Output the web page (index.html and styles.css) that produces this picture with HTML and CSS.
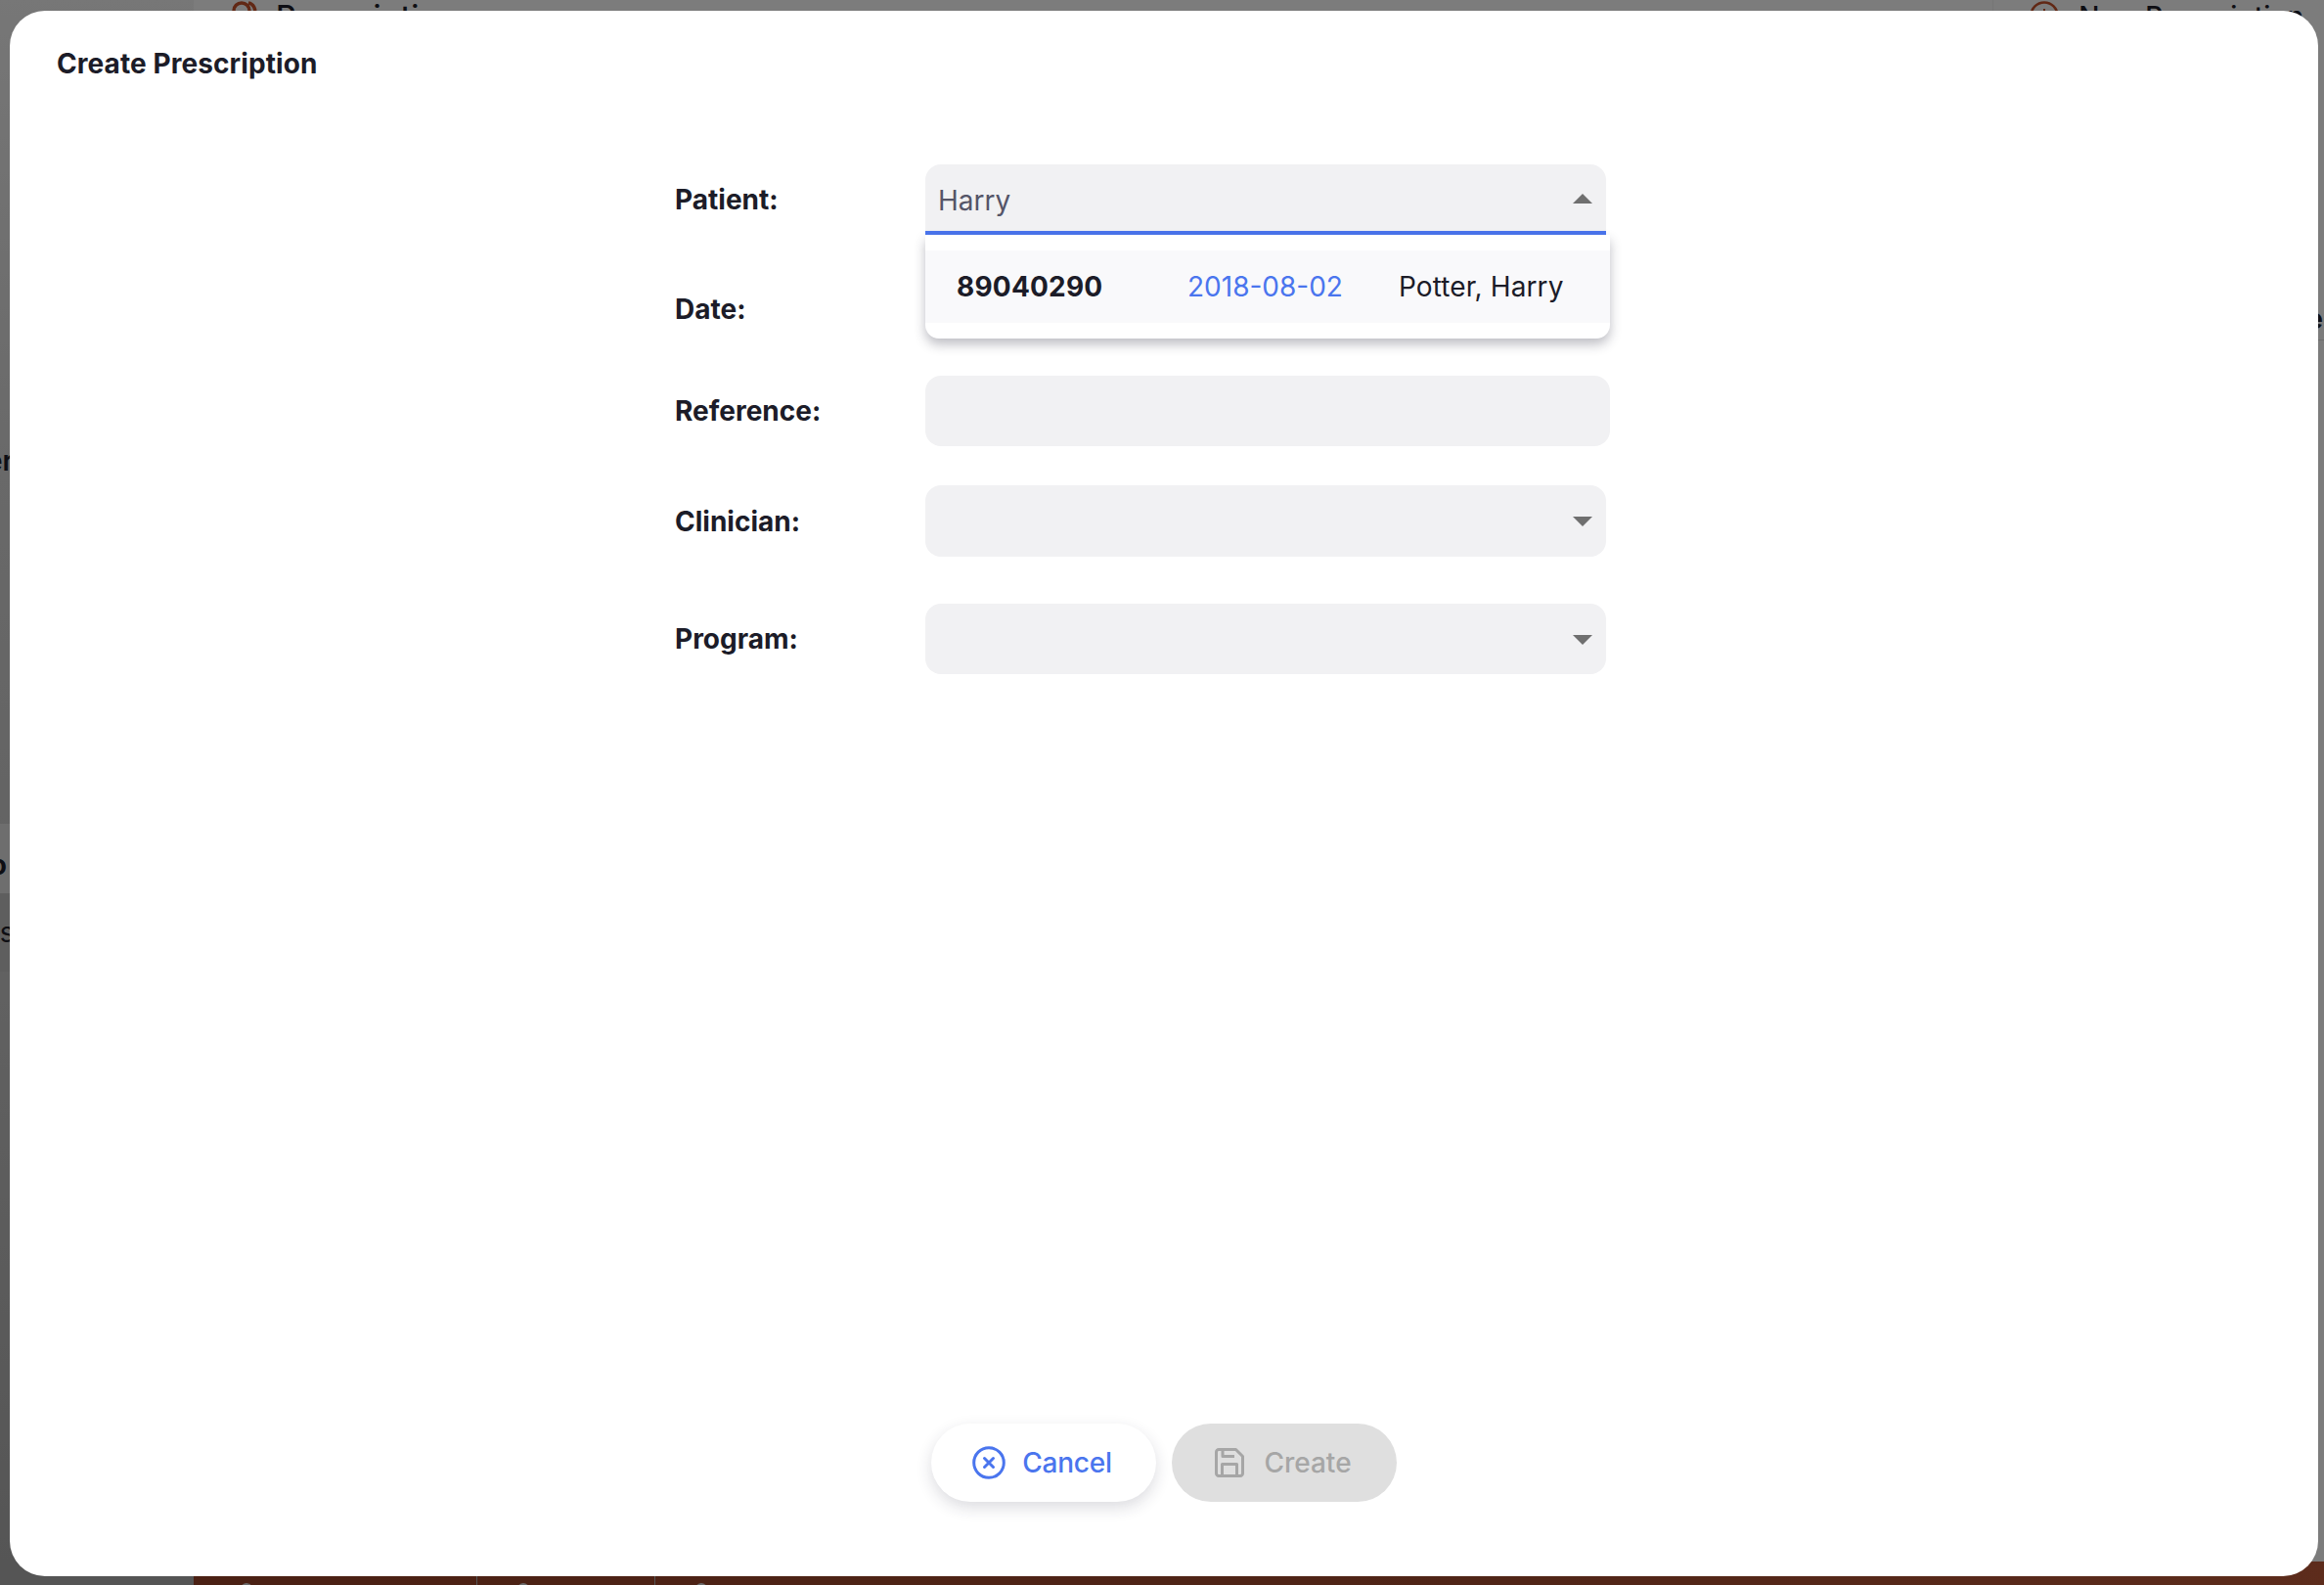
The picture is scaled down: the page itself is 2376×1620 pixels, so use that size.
FILE: index.html
```html
<!DOCTYPE html>
<html lang="en">
<head>
<meta charset="utf-8">
<title>Create Prescription</title>
<link rel="stylesheet" href="styles.css">
</head>
<body>
<div class="app">
  <aside class="sidebar">
    <div class="side-spacer-a"></div>
    <div class="side-text side-text-a">Center</div>
    <div class="side-spacer-b"></div>
    <div class="side-block">
      <div class="side-text side-bold">Info</div>
    </div>
    <div class="side-block side-block-dark">
      <div class="side-text side-thin">Items</div>
    </div>
  </aside>
  <main class="main">
    <header class="topbar">
      <div class="top-item top-item-left">
        <svg class="top-icon top-icon-left" viewBox="0 0 26 32"><circle cx="10" cy="10" r="8" fill="none" stroke="#c2512a" stroke-width="3.5"/><path d="M17 2a8 8 0 0 1 6 11" fill="none" stroke="#c2512a" stroke-width="3.5"/></svg>
        <span class="top-label">Prescriptions</span>
      </div>
      <div class="top-item top-item-right">
        <svg class="top-icon top-icon-right" viewBox="0 0 30 30"><circle cx="15" cy="15" r="13.5" fill="none" stroke="#c2512a" stroke-width="2.6"/><path d="M15 8v14M8 15h14" stroke="#c2512a" stroke-width="2"/></svg>
        <span class="top-label">New Prescription</span>
      </div>
    </header>
    <div class="main-body">
      <div class="main-row"><div class="main-edge">Type</div></div>
    </div>
    <footer class="footer-bar">
      <div class="foot-cell foot-cell-a"><span class="foot-icon"></span></div>
      <div class="foot-cell foot-cell-b"><span class="foot-icon"></span></div>
      <div class="foot-cell foot-cell-c"><span class="foot-icon"></span></div>
    </footer>
  </main>
</div>
<div class="scrim"></div>
<section class="modal">
  <h1 class="modal-title">Create Prescription</h1>
  <form class="form">
    <div class="row row-patient">
      <label class="label">Patient:</label>
      <div class="select select-open">
        <span class="value">Harry</span>
        <span class="caret caret-up"></span>
      </div>
    </div>
    <div class="row row-date">
      <label class="label">Date:</label>
    </div>
    <div class="row row-reference">
      <label class="label">Reference:</label>
      <div class="input"></div>
    </div>
    <div class="row row-clinician">
      <label class="label">Clinician:</label>
      <div class="select"><span class="caret caret-down"></span></div>
    </div>
    <div class="row row-program">
      <label class="label">Program:</label>
      <div class="select"><span class="caret caret-down"></span></div>
    </div>
    <div class="menu">
      <div class="option">
        <span class="opt-id">89040290</span>
        <span class="opt-date">2018-08-02</span>
        <span class="opt-name">Potter, Harry</span>
      </div>
    </div>
  </form>
  <div class="actions">
    <button type="button" class="btn btn-cancel">
      <svg class="btn-icon" viewBox="0 0 34 34"><circle cx="17" cy="17" r="15.3" fill="none" stroke="currentColor" stroke-width="3"/><path d="M12.5 12.5l9 9M21.5 12.5l-9 9" fill="none" stroke="currentColor" stroke-width="3" stroke-linecap="round"/></svg>
      <span>Cancel</span>
    </button>
    <button type="button" class="btn btn-create">
      <svg class="btn-icon-save" viewBox="0 0 30 30"><path d="M4 1.5h17.5l7 7V26a2.5 2.5 0 0 1-2.5 2.5H4A2.5 2.5 0 0 1 1.500 26V4A2.500 2.500 0 0 1 4 1.500z" fill="none" stroke="currentColor" stroke-width="3" stroke-linejoin="round"/><path d="M8 1.500v7h12M7.500 28.500V16.500h15v12" fill="none" stroke="currentColor" stroke-width="3" stroke-linejoin="round"/></svg>
      <span>Create</span>
    </button>
  </div>
</section>
</body>
</html>
```
FILE: styles.css
```css
* { box-sizing: border-box; }
html, body { margin: 0; height: 100%; overflow: hidden; }
body { font-family: Inter, "Liberation Sans", sans-serif; color: #1c1c28; background: #f5f5f5; }

.app { display: flex; height: 1620px; width: 2376px; }
.sidebar { width: 198px; flex: none; display: flex; flex-direction: column; background: linear-gradient(180deg, #eeeeee 0%, #d2d2d2 30%, #c4c4c4 60%, #aaaaaa 100%); overflow: hidden; }
.side-spacer-a { height: 448px; }
.side-spacer-b { height: 348px; }
.side-text { font-size: 28px; white-space: nowrap; }
.side-text-a { height: 46px; line-height: 46px; font-weight: 600; margin-left: -78px; }
.side-block { background: #dcdcdc; height: 71px; line-height: 71px; overflow: hidden; }
.side-block-dark { background: #bcbcbc; height: 80px; line-height: 80px; }
.side-bold { font-weight: 700; margin-left: -46px; padding-top: 7px; }
.side-thin { font-weight: 400; margin-left: -58px; }

.main { flex: 1; display: flex; flex-direction: column; background: #f8f8f8; }
.topbar { height: 40px; display: flex; justify-content: space-between; padding: 0 21px 0 39px; overflow: hidden; }
.top-item { display: flex; white-space: nowrap; }
.top-item-left { gap: 19px; font-size: 32px; font-weight: 500; }
.top-item-right { gap: 20px; font-size: 28px; font-weight: 500; padding-left: 37px; border-left: 1px solid #ececec; }
.top-label { line-height: 44px; margin-top: -4px; }
.top-item-right .top-label { margin-top: -5px; }
.top-icon { flex: none; margin-top: 1px; }
.top-icon-left { width: 26px; height: 32px; }
.top-icon-right { width: 30px; height: 30px; }
.main-body { flex: 1; padding-top: 264px; overflow: hidden; }
.main-row { height: 44px; display: flex; justify-content: flex-end; border-bottom: 1px solid #dcdcdc; padding-right: 1px; }
.main-edge { font-size: 28px; font-weight: 700; line-height: 44px; width: 17px; overflow: hidden; direction: rtl; }
.footer-bar { height: 24px; display: flex; background: linear-gradient(90deg, #964228 0%, #a04a2e 60%, #ba5838 100%); }
.foot-cell { height: 100%; border-right: 1px solid #a8a8a8; padding: 22px 0 0 41px; overflow: hidden; }
.foot-cell-a { width: 290px; padding-left: 48px; }
.foot-cell-b { width: 182px; }
.foot-cell-c { flex: 1; border-right: 0; }
.foot-icon { display: block; width: 12px; height: 12px; border-radius: 50%; background: #d8d8d8; }

.scrim { position: fixed; inset: 0; background: rgba(0, 0, 0, 0.5); }

.modal { position: fixed; left: 10px; top: 11px; width: 2360px; height: 1600px; background: #fff; border-radius: 36px; display: flex; flex-direction: column; }
.modal-title { margin: 0; padding: 35px 0 0 48px; font-size: 28px; font-weight: 700; line-height: 38px; letter-spacing: 0.08px; }

.form { position: relative; margin: 84px 0 0 680px; width: 956px; display: flex; flex-direction: column; }
.row { display: flex; align-items: center; }
.row-patient { height: 72px; }
.row-date { height: 72px; margin-top: 40px; }
.row-reference { height: 72px; margin-top: 32px; }
.row-clinician { height: 73px; margin-top: 40px; }
.row-program { height: 72px; margin-top: 48px; }
.label { width: 256px; flex: none; font-size: 28px; font-weight: 700; line-height: 34px; }
.select, .input { height: 100%; background: #f1f1f3; border-radius: 16px; display: flex; align-items: center; flex: none; }
.select { width: 696px; padding: 0 14px 0 13px; justify-content: space-between; }
.input { width: 700px; }
.select:not(.select-open) { justify-content: flex-end; }
.select-open { border-bottom: 4px solid #4a75ee; border-radius: 16px 16px 0 0; }
.value { font-size: 28px; color: #555568; padding-top: 5px; }
.caret { width: 0; height: 0; border-left: 10px solid transparent; border-right: 10px solid transparent; }
.caret-up { border-bottom: 10px solid #6f6f6f; margin-top: 2px; }
.caret-down { border-top: 10px solid #6f6f6f; margin-top: 1px; }

.menu { position: absolute; left: 256px; top: 72px; width: 700px; height: 106px; background: #fff; border-radius: 0 0 14px 14px; padding: 16px 0; box-shadow: 0 6px 12px rgba(40, 40, 60, 0.3); }
.option { height: 74px; background: #f9f9fb; display: flex; align-items: center; font-size: 28px; white-space: nowrap; }
.opt-id { width: 268px; padding-left: 32px; font-weight: 700; letter-spacing: 0.2px; flex: none; }
.opt-date { width: 216px; color: #4a75ee; flex: none; }
.opt-name { flex: none; letter-spacing: 0.1px; }

.actions { margin-top: auto; margin-bottom: 76px; display: flex; gap: 16px; padding-left: 942px; }
.btn { width: 230px; height: 80px; border-radius: 40px; border: 0; display: flex; align-items: center; justify-content: center; font: 500 28px Inter, "Liberation Sans", sans-serif; }
.btn-cancel { background: #fff; color: #4a75ee; box-shadow: 0 6px 16px rgba(40, 40, 60, 0.16); gap: 17px; letter-spacing: -0.2px; padding: 0 3px 0 0; }
.btn-create { background: #dfdfdf; color: #a6a6a6; gap: 20px; padding: 0 2px 0 0; }
.btn-icon { width: 34px; height: 34px; flex: none; }
.btn-icon-save { width: 30px; height: 30px; flex: none; }
```
